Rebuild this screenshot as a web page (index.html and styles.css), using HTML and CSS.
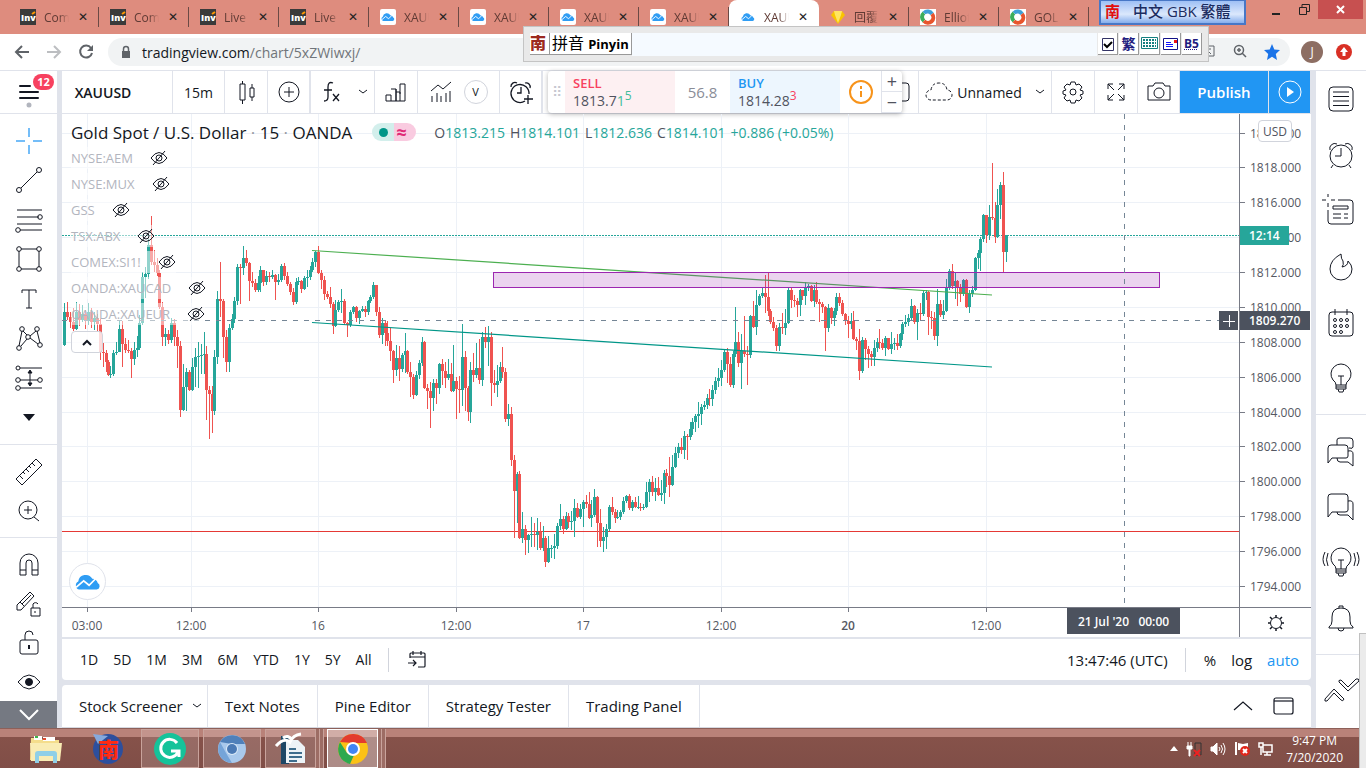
FILE: index.html
```
<!DOCTYPE html>
<html lang="en">
<head>
    <meta charset="UTF-8">
    <meta name="viewport" content="width=device-width, initial-scale=1.0">
    <title>XAUUSD Chart</title>
    <link rel="stylesheet" href="styles.css">
</head>
<body>
    <svg class="defs" aria-hidden="true">
        <symbol id="cloud" viewBox="0 0 24 16">
            <path fill="#2f9df4" d="M4 15a4 4 0 0 1-1-7.500A7 7 0 0 1 16 5a5.500 5.500 0 0 1 5 4 3.200 3.200 0 0 1-1 6z"/>
            <path fill="none" stroke="#fff" stroke-width="1.600" d="M1 13l7-6 5 4 6-6"/>
        </symbol>
        <symbol id="eye-off" viewBox="0 0 18 16">
            <path d="M1 8q8-11 16 0q-8 11-16 0zM15 1L3 15"/><circle cx="9" cy="8" r="3"/>
        </symbol>
        <symbol id="inv" viewBox="0 0 16 16">
            <rect width="16" height="16" fill="#3a3a3a"/>
            <text x="1" y="12" font-family="Open Sans, sans-serif" font-size="9" font-weight="800" fill="#fff">Inv</text>
            <path d="M12 5l3-2" stroke="#f90" stroke-width="2"/>
        </symbol>
        <symbol id="swirl" viewBox="0 0 16 16">
            <rect width="16" height="16" fill="#fff"/>
            <g fill="none" stroke-width="4"><path stroke="#3cae5c" d="M4 12A5 5 0 0 1 4 4"/><path stroke="#3d9fd6" d="M4 4a5 5 0 0 1 8 1"/><path stroke="#e8552d" d="M12 5a5 5 0 0 1-8 7"/></g>
        </symbol>
    </svg>

    <div class="tabstrip">
        <div class="tab"><svg><use href="#inv"/></svg><span>Com</span><button aria-label="Close tab">✕</button></div>
        <div class="tab"><svg><use href="#inv"/></svg><span>Com</span><button aria-label="Close tab">✕</button></div>
        <div class="tab"><svg><use href="#inv"/></svg><span>Live E</span><button aria-label="Close tab">✕</button></div>
        <div class="tab"><svg><use href="#inv"/></svg><span>Live E</span><button aria-label="Close tab">✕</button></div>
        <div class="tab"><svg class="white"><use href="#cloud"/></svg><span>XAUU</span><button aria-label="Close tab">✕</button></div>
        <div class="tab"><svg class="white"><use href="#cloud"/></svg><span>XAUU</span><button aria-label="Close tab">✕</button></div>
        <div class="tab"><svg class="white"><use href="#cloud"/></svg><span>XAUU</span><button aria-label="Close tab">✕</button></div>
        <div class="tab"><svg class="white"><use href="#cloud"/></svg><span>XAUU</span><button aria-label="Close tab">✕</button></div>
        <div class="tab active"><svg class="white"><use href="#cloud"/></svg><span>XAUU</span><button aria-label="Close tab">✕</button></div>
        <div class="tab"><svg viewBox="0 0 16 16"><path fill="#f9c400" d="M4 2h8l3 4-7 9-7-9z"/><path fill="#ffe561" d="M5 6h6l-3 8zM4 2l1 4h6l1-4z"/></svg><span>回覆</span><button aria-label="Close tab">✕</button></div>
        <div class="tab"><svg><use href="#swirl"/></svg><span>Elliot</span><button aria-label="Close tab">✕</button></div>
        <div class="tab"><svg><use href="#swirl"/></svg><span>GOLD</span><button aria-label="Close tab">✕</button></div>
        <div class="window-buttons">
            <button aria-label="Minimize"><svg width="10" height="12"><path d="M1 10h8" stroke="#222" stroke-width="2"/></svg></button>
            <button aria-label="Restore"><svg width="11" height="11" fill="none" stroke="#222"><path d="M.5 3.500h7v7h-7zM3 3V.5h7.500v7H8"/></svg></button>
            <button class="close" aria-label="Close"><svg width="9" height="9"><path d="M1 1l7 7M8 1l-7 7" stroke="#fff" stroke-width="2"/></svg></button>
        </div>
    </div>

    <div class="addressbar">
        <button aria-label="Back"><svg width="16" height="16" fill="none" stroke="#5f6368" stroke-width="2"><path d="M15 8H2M8 2L2 8l6 6"/></svg></button>
        <button aria-label="Forward"><svg width="16" height="16" fill="none" stroke="#bcbec1" stroke-width="2"><path d="M1 8h13M8 2l6 6-6 6"/></svg></button>
        <button aria-label="Reload"><svg width="16" height="16" fill="none" stroke="#5f6368" stroke-width="2"><path d="M13 4a6 6 0 1 0 1 5"/><path fill="#5f6368" stroke="none" d="M15 1v6H9z"/></svg></button>
        <div class="url">
            <svg width="10" height="13"><path fill="#5f6368" d="M1 5h8v7H1z"/><path fill="none" stroke="#5f6368" stroke-width="1.500" d="M2.500 5V3a2.500 2.500 0 0 1 5 0v2"/></svg>
            <span>tradingview.com<i>/chart/5xZWiwxj/</i></span>
            <div class="url-icons">
                <svg width="14" height="14" fill="none" stroke="#5f6368"><path d="M1 2h11v10H1zM4 5h5M6 3v2l-3 4M5 6l4 4"/></svg>
                <svg width="14" height="14" fill="none" stroke="#5f6368" stroke-width="1.500"><circle cx="6" cy="6" r="4.500"/><path d="M9 9l4 4M4 6h4M6 4v4"/></svg>
                <svg width="16" height="16"><path fill="#1a73e8" d="M8 0l2.300 5.400 5.700.6-4.200 4 1.200 6L8 12.700 3 16l1.200-6L0 6l5.700-.6z"/></svg>
            </div>
        </div>
        <div class="avatar">J</div>
        <svg width="16" height="16"><circle cx="8" cy="8" r="8" fill="#d93025"/><path fill="#fff" d="M8 3l4 5H9.500v4h-3V8H4z"/></svg>
    </div>

    <div class="app">
        <nav class="left-toolbar">
            <button class="menu" aria-label="Menu"><svg width="22" height="26" stroke="#131722" stroke-width="2" stroke-linecap="round"><path d="M2 7h10M2 13h18M2 19h18"/><circle cx="11" cy="26" r="1.500" fill="#b2b5be" stroke="#b2b5be"/></svg><b>12</b></button>
            <div class="tools drawing">
                <button aria-label="Cross"><svg viewBox="0 0 28 28"><path stroke="#74bdf8" stroke-width="2" d="M14 1v9M14 18v9M1 14h9M18 14h9"/></svg></button>
                <button aria-label="Trend line"><svg viewBox="0 0 28 28"><circle cx="4" cy="24" r="2.500"/><circle cx="24" cy="4" r="2.500"/><path d="M6 22L22 6"/></svg></button>
                <button aria-label="Fib retracement"><svg viewBox="0 0 28 28"><path d="M2 4h25M2 11h22M2 18h25M5 24h22"/><circle cx="25" cy="11" r="2.300"/><circle cx="3" cy="24" r="2.300"/></svg></button>
                <button aria-label="Rectangle"><svg viewBox="0 0 28 28"><path d="M6 4h16M24 6v16M22 24H6M4 22V6"/><circle cx="4" cy="4" r="2.300"/><circle cx="24" cy="4" r="2.300"/><circle cx="4" cy="24" r="2.300"/><circle cx="24" cy="24" r="2.300"/></svg></button>
                <button aria-label="Text"><svg viewBox="0 0 28 28"><path d="M7 8V5h14v3M14 5v18M11 23h6"/></svg></button>
                <button aria-label="Pattern"><svg viewBox="0 0 28 28"><circle cx="4" cy="24" r="2.300"/><circle cx="7" cy="5" r="2.300"/><circle cx="13" cy="13" r="2.300"/><circle cx="22" cy="5" r="2.300"/><circle cx="25" cy="21" r="2.300"/><path d="M4 22L7 7M8 7l4 4M15 12l6-5M22 7l3 12M23 20l-8-6M6 22l6-7"/></svg></button>
                <button aria-label="Forecast"><svg viewBox="0 0 28 28"><path d="M5 4h22M5 16h18M5 24h22"/><path fill="#131722" d="M15 7v13M13 9l2-3 2 3zM13 19l2 3 2-3z"/><circle cx="3" cy="4" r="2"/><circle cx="3" cy="16" r="2.300"/><circle cx="25" cy="16" r="2.300"/><circle cx="3" cy="24" r="2.300"/></svg></button>
                <button aria-label="Icons"><svg viewBox="0 0 28 28"><path fill="#131722" stroke="none" d="M8 11h12l-6 7z"/></svg></button>
            </div>
            <div class="tools">
                <button aria-label="Measure"><svg viewBox="0 0 28 28"><path d="M1 21L21 1l6 6L7 27zM5 18l3 3M8 14l2 2M11 11l3 3M14 8l2 2M17 5l3 3"/></svg></button>
                <button aria-label="Zoom in"><svg viewBox="0 0 28 28"><circle cx="13" cy="13" r="9"/><path d="M19 20l5 4M9 13h8M13 9v8"/></svg></button>
            </div>
            <div class="tools">
                <button aria-label="Magnet"><svg viewBox="0 0 28 28"><path d="M5 24V12a9 9 0 0 1 18 0v12h-6V12a3 3 0 0 0-6 0v12zM5 19h6M17 19h6"/></svg></button>
                <button aria-label="Stay in drawing mode"><svg viewBox="0 0 28 28"><path d="M2 20v-5L15 2l4 4L6 20zM5 12l4 4M7 14l9-9M16 18h9v8h-9zM18 18v-4a3 3 0 0 1 5 0M20 21v2"/></svg></button>
                <button aria-label="Lock drawings"><svg viewBox="0 0 28 28"><rect x="5" y="11" width="18" height="14" rx="2"/><path d="M10 11V6a4 4 0 0 1 8 0"/><path stroke-width="2" d="M14 16v4"/></svg></button>
                <button aria-label="Hide drawings"><svg viewBox="0 0 28 28"><path d="M3 14q11-14 22 0q-11 14-22 0z"/><circle cx="14" cy="14" r="3.500" fill="#131722"/></svg></button>
            </div>
            <button class="more" aria-label="More tools"><svg width="20" height="12" fill="none" stroke="#fff" stroke-width="2"><path d="M1 1l9 9 9-9"/></svg></button>
        </nav>

        <main class="center">
            <header class="chart-header">
                <button class="symbol">XAUUSD</button>
                <button class="interval">15m</button>
                <button class="w43" aria-label="Candles"><svg viewBox="0 0 28 28"><path d="M8 6h5v16H8zM10.500 3v3M10.500 22v4M18 10h4v9h-4zM20 6v4M20 19v4"/></svg></button>
                <button class="w43 thick" aria-label="Compare"><svg viewBox="0 0 28 28"><circle cx="14" cy="14" r="10"/><path d="M14 9v10M9 14h10"/></svg></button>
                <button class="w64" aria-label="Indicators"><svg viewBox="0 0 28 28"><path stroke-width="1.300" d="M15 5q-5-2-5 4v10q0 4-4 4M6 12h8M15 16l6 7M21 16l-6 7"/></svg><svg class="caret" viewBox="0 0 10 6"><path d="M1 1l4 3 4-3"/></svg></button>
                <button class="w43" aria-label="Financials"><svg viewBox="0 0 28 28"><path d="M4 17h5v6H4zM9 23h5V11H9M14 11v12h4v-9h-4M18 23h5V6h-5v10"/></svg></button>
                <button class="w82" aria-label="Templates"><svg viewBox="0 0 28 28"><path d="M4 13l7-6 5 4 8-7M5 18v6M10 15v9M14 18v6M19 15v9M23 13v11"/></svg><span class="round">V</span></button>
                <button class="w43 thick" aria-label="Alert"><svg viewBox="0 0 28 28"><path stroke-width="1.300" d="M18 23a9 9 0 1 1 4-7M14 9v6h-4M4 9a4 4 0 0 1 6-4M18 5a4 4 0 0 1 5 5M17 21h9M21 17v9"/></svg></button>
                <span class="spacer"></span>
                <button class="w41" aria-label="Layout"><svg viewBox="0 0 28 28"><rect x="3" y="5" width="22" height="18" rx="3"/></svg></button>
                <button class="layout-name"><svg viewBox="0 0 28 28" stroke-dasharray="3 2"><path d="M6 22a5 5 0 0 1 0-10q1-7 8-7t8 7a5 5 0 0 1 0 10z"/></svg>Unnamed<svg class="caret" viewBox="0 0 10 6"><path d="M1 1l4 3 4-3"/></svg></button>
                <button class="w43" aria-label="Settings"><svg viewBox="0 0 28 28"><circle cx="14" cy="14" r="3"/><path d="M12 4h4l1 3 3-1 3 3-2 3 3 1v3l-3 1 2 3-3 3-3-1-1 3h-4l-1-3-3 1-3-3 2-3-3-1v-3l3-1-2-3 3-3 3 1z"/></svg></button>
                <button class="w43" aria-label="Fullscreen"><svg viewBox="0 0 28 28"><path d="M6 11V6h5M6 6l6 6M17 6h5v5M22 6l-6 6M6 17v5h5M6 22l6-6M22 17v5h-5M22 22l-6-6"/></svg></button>
                <button class="w42" aria-label="Snapshot"><svg viewBox="0 0 28 28"><path d="M3 8h5l2-3h8l2 3h5v14H3z"/><circle cx="14" cy="15" r="5"/></svg></button>
                <button class="publish">Publish</button>
                <button class="play" aria-label="Play"><svg viewBox="0 0 28 28"><circle cx="14" cy="14" r="11"/><path fill="#fff" stroke="none" d="M11 9l7 5-7 5z"/></svg></button>

                <div class="trade">
                    <span class="grip">⠿</span>
                    <button class="sell"><b>SELL</b><span>1813.7<em>1<sup>5</sup></em></span></button>
                    <span class="spread">56.8</span>
                    <button class="buy"><b>BUY</b><span>1814.28<em><sup>3</sup></em></span></button>
                    <button class="info" aria-label="Info"><svg width="24" height="24" fill="none" stroke="#f7931a" stroke-width="2"><circle cx="12" cy="12" r="11"/><path d="M12 11v6M12 6v3"/></svg></button>
                    <div class="step"><button>+</button><button>−</button></div>
                </div>
            </header>

            <section class="chart">
                <div class="pane">
                    <svg id="plot" class="plot"></svg>
                    <div class="legend">
                        <div class="title">
                            <h1>Gold Spot / U.S. Dollar <i>·</i> 15 <i>·</i> OANDA</h1>
                            <span class="status"><i></i><b>≈</b></span>
                            <span class="ohlc"><span><i>O</i>1813.215</span><span><i>H</i>1814.101</span><span><i>L</i>1812.636</span><span><i>C</i>1814.101</span><span>+0.886 (+0.05%)</span></span>
                        </div>
                        <ul>
                            <li>NYSE:AEM<svg><use href="#eye-off"/></svg></li>
                            <li>NYSE:MUX<svg><use href="#eye-off"/></svg></li>
                            <li>GSS<svg><use href="#eye-off"/></svg></li>
                            <li>TSX:ABX<svg><use href="#eye-off"/></svg></li>
                            <li>COMEX:SI1!<svg><use href="#eye-off"/></svg></li>
                            <li>OANDA:XAUCAD<svg><use href="#eye-off"/></svg></li>
                            <li>OANDA:XAUEUR<svg><use href="#eye-off"/></svg></li>
                        </ul>
                        <button class="collapse" aria-label="Collapse"><svg width="10" height="7" fill="none" stroke="#131722" stroke-width="2"><path d="M1 6l4-4 4 4"/></svg></button>
                    </div>
                    <a class="tv-logo" href="#" aria-label="TradingView"><svg width="26" height="18"><use href="#cloud"/></svg></a>
                    <button class="add-line" aria-label="Add"><svg width="12" height="12" stroke="#fff"><path d="M6.500 0v12M0 6.500h12"/></svg></button>
                </div>
                <div class="price-axis">
                    <svg id="prices" class="plot"></svg>
                    <button class="currency">USD</button>
                    <span class="tag last">12:14</span>
                    <span class="tag cross">1809.270</span>
                </div>
                <div class="time-axis">
                    <svg id="times" class="plot"></svg>
                    <span class="tag date">21 Jul '20 &nbsp; 00:00</span>
                </div>
                <button class="axis-settings" aria-label="Axis settings"><svg width="18" height="18" fill="none" stroke="#131722"><circle cx="9" cy="9" r="5.500"/><path stroke-width="1.500" d="M9 1v2M9 15v2M1 9h2M15 9h2M3 3l2 2M13 13l2 2M3 15l2-2M13 5l2-2"/></svg></button>
            </section>

            <div class="range-bar">
                <button>1D</button><button>5D</button><button>1M</button><button>3M</button><button>6M</button><button>YTD</button><button>1Y</button><button>5Y</button><button>All</button>
                <button class="goto" aria-label="Go to date"><svg width="20" height="20" fill="none" stroke="#131722" stroke-width="1.200"><path d="M3 8V4q0-1 1-1h13q1 0 1 1v12q0 1-1 1h-6M3 7h15M6 1v4M14 1v4M1 13h8M6 10l3 3-3 3"/></svg></button>
                <span class="spacer"></span>
                <button class="clock">13:47:46 (UTC)</button>
                <button class="pct">%</button><button class="log">log</button><button class="auto">auto</button>
            </div>

            <div class="panel-tabs">
                <button>Stock Screener<svg class="caret" viewBox="0 0 10 6"><path d="M1 1l4 3 4-3"/></svg></button>
                <button>Text Notes</button>
                <button>Pine Editor</button>
                <button>Strategy Tester</button>
                <button>Trading Panel</button>
                <span class="spacer"></span>
                <svg width="20" height="10" fill="none" stroke="#131722" stroke-width="1.200"><path d="M1 9l9-8 9 8"/></svg>
                <svg width="22" height="18" fill="none" stroke="#131722" stroke-width="1.200"><rect x="1" y="1" width="19" height="16" rx="2"/><path d="M1 4h19"/></svg>
            </div>
        </main>

        <nav class="right-toolbar">
            <div>
                <button aria-label="Watchlist"><svg viewBox="0 0 28 28"><rect x="2" y="2" width="24" height="24" rx="4"/><path d="M6 7h16M6 11.500h16M6 16h16M6 20.500h16"/></svg></button>
                <button aria-label="Alerts"><svg viewBox="0 0 28 28"><circle cx="14" cy="15" r="11"/><path d="M14 7v8H8M3 9a5 5 0 0 1 7-6M18 3a5 5 0 0 1 7 6M6 24l-2 3M22 24l2 3"/></svg></button>
                <button aria-label="Data window"><svg viewBox="0 0 28 28"><path d="M11 3h12q3 0 3 3v18q0 3-3 3H4q-3 0-3-3V13M1 0v-3M1 6v4M-5 3h4M4 3h4M6 9h15v3H6zM6 17h8M17 17h4M6 21h8M17 21h4"/></svg></button>
                <button aria-label="Hotlist"><svg viewBox="0 0 28 28"><path d="M14 1q0 5 2 7 1 4-1 6 6-1 6-6 4 4 4 8a11 11 0 0 1-22 0q0-9 11-15z"/></svg></button>
                <button aria-label="Calendar"><svg viewBox="0 0 28 28"><rect x="2" y="3" width="24" height="24" rx="3"/><path d="M8 0v6M20 0v6"/><g><circle cx="8" cy="11" r="1.500"/><circle cx="14" cy="11" r="1.500"/><circle cx="20" cy="11" r="1.500"/><circle cx="8" cy="17" r="1.500"/><circle cx="14" cy="17" r="1.500"/><circle cx="20" cy="17" r="1.500"/><circle cx="8" cy="23" r="1.500"/><circle cx="14" cy="23" r="1.500"/></g></svg></button>
                <button aria-label="My ideas"><svg viewBox="0 0 28 28"><path d="M9 20q0-3-3-5a10 10 0 1 1 16 0q-3 2-3 5zM9 20v4h10v-4M9 22h10M11 24l1 3h4l1-3M14 20v-9M11 11h6"/></svg></button>
            </div>
            <div>
                <button aria-label="Public chats"><svg viewBox="0 0 28 28"><path d="M1 26V11q0-3 3-3h14q3 0 3 3v8q0 2-2 2H5zM10 8V3q0-2 3-2h10q3 0 3 3v6q0 2-4 1M21 14q5-1 5 3v12l-5-4h-8q-3 0-3-4"/></svg></button>
                <button aria-label="Private chats"><svg viewBox="0 0 28 28"><path d="M1 24V4q0-3 3-3h14q3 0 3 3v13q0 2-3 2H5zM21 8q5-1 5 3v16l-5-5h-8q-3 0-3-3"/></svg></button>
                <button aria-label="Ideas stream"><svg viewBox="0 0 28 28"><path d="M9 20q0-3-3-5a10 10 0 1 1 16 0q-3 2-3 5zM9 20v4h10v-4M9 22h10M11 24l1 3h4l1-3M14 20v-9M11 11h6M1 4q-3 7 0 13M-2 3q-4 8 0 14M27 4q3 7 0 13M30 3q4 8 0 14"/></svg></button>
                <button aria-label="Notifications"><svg viewBox="0 0 28 28"><path d="M2 22q3-2 3-6V12q0-9 9-9t9 9v4q0 4 3 6v1H2zM12 3V1h4v2M11 23q0 3 3 3t3-3"/></svg></button>
            </div>
            <div>
                <button aria-label="Order panel"><svg viewBox="0 0 28 28"><path d="M-2 22L7 12l10 10q-1 3-3 1l-7-7-7 8q-3 1-2-2zM12 5l9 9 11-10q0-3-3-2l-8 8-7-7q-3 0-2 2z"/></svg></button>
            </div>
        </nav>
    </div>

    <footer class="taskbar">
        <button aria-label="Explorer"><svg width="34" height="30"><path fill="#f4dd8c" d="M2 4h10l2 2h16v20H1z"/><path fill="#fff" d="M5 2h8v4H5zM14 3h12v4H14z"/><path fill="#3cb44a" d="M6 2h3v2H6z"/><path fill="#e0492f" d="M14 4h3v2h-3z"/><path fill="#f9ecb4" d="M1 9h32l-2 18H2z"/><path fill="#8fcfe8" d="M6 20q0-3 3-3h16q3 0 3 3v9h-4v-7H10v7H6z"/></svg></button>
        <button aria-label="NJStar"><svg width="32" height="32"><circle cx="16" cy="16" r="15" fill="#2d4f9d"/><path fill="#86a9dd" d="M1 1l15 2-10 8z"/><text x="6" y="24" font-family="Noto Sans CJK SC, sans-serif" font-size="21" font-weight="900" fill="#ff2a12">南</text></svg></button>
        <button class="open" aria-label="Grammarly"><svg width="32" height="32"><circle cx="16" cy="16" r="16" fill="#15c39a"/><path fill="none" stroke="#fff" stroke-width="3" d="M23 10a9 9 0 1 0 1 9M17 18h8v6"/></svg></button>
        <button class="open" aria-label="Chromium"><svg width="30" height="30"><circle cx="15" cy="15" r="14" fill="#a9c9ec"/><path fill="#4f80ba" d="M3 8a14 14 0 0 1 25 2H15z"/><path fill="#75a4d8" d="M3 8l6 11 6 10A14 14 0 0 1 3 8z"/><circle cx="15" cy="15" r="6" fill="#dbe9f7"/><circle cx="15" cy="15" r="5" fill="#4b7ab5"/></svg></button>
        <button class="open stacked" aria-label="Writer"><svg width="32" height="32"><path fill="#1d4766" d="M6 3h8v28H6z"/><path fill="#edf3f7" d="M11 7h12l7 7v16H11z"/><path stroke="#3e6d8d" stroke-width="2" d="M14 16h7M14 20h13M14 24h13M14 28h8"/><path fill="none" stroke="#fff" stroke-width="3" d="M1 13q8-9 14-4 3-7 11-8M8 5q5-4 9 2"/></svg></button>
        <button class="open stacked current" aria-label="Chrome"><svg width="30" height="30"><circle cx="15" cy="15" r="15" fill="#fbc116"/><path fill="#e33b2e" d="M2 8a15 15 0 0 1 27 1H15z"/><path fill="#2da94f" d="M2 8l7 11 7 2-4 9A15 15 0 0 1 2 8z"/><circle cx="15" cy="15" r="7" fill="#fff"/><circle cx="15" cy="15" r="5" fill="#4285f4"/></svg></button>
        <span class="spacer"></span>
        <div class="tray">
            <svg width="8" height="5"><path fill="#fff" d="M0 5l4-5 4 5z"/></svg>
            <svg width="16" height="16" fill="none" stroke="#fff"><path d="M2 1v4M5 1v4"/><path fill="#fff" d="M1 5h5v3H1zM3 8h1v7H3z"/><path stroke="#333" d="M9 2h6v12H9z"/><path stroke="#e22" stroke-width="2" d="M8 9l6 6M14 9l-6 6"/></svg>
            <svg width="16" height="14" fill="none" stroke="#fff"><path fill="#fff" d="M1 5h2l4-4v12L3 9H1z"/><path d="M9 5q2 2 0 4M11 3q3 4 0 8M13 1q4 6 0 12"/></svg>
            <svg width="16" height="15"><path fill="#fff" d="M1 1h2v13H1zM4 2l5 1 5-1v7H4z"/><circle cx="11" cy="10" r="5" fill="#e0261a"/><path stroke="#fff" stroke-width="2" d="M9 8l4 4M13 8l-4 4"/></svg>
            <svg width="16" height="14" fill="none" stroke="#fff" stroke-width="1.500"><path d="M5 3h9v7H5zM9 10v3M6 13h7M1 1h4v4H1zM3 5v8"/></svg>
        </div>
        <time>9:47 PM<br>7/20/2020</time>
    </footer>

    <div class="ime">
        <span class="ime-icon">南</span><span class="ime-name">拼音 <b>Pinyin</b></span>
        <input type="text" aria-label="Composition">
        <button aria-label="Options"><svg width="14" height="16" fill="none" stroke="#336"><path d="M1.500 2.500h11v12h-11z"/><path stroke="#000" stroke-width="2" d="M3 8l3 3 5-5"/></svg></button>
        <button class="fan">繁</button>
        <button aria-label="Keyboard"><svg width="17" height="13"><path fill="#fff" stroke="#148080" d="M.5.5h16v11H.5z"/><path stroke="#148080" stroke-width="2" stroke-dasharray="2 1" d="M2 3h13M2 6h13M2 9h13"/></svg></button>
        <button aria-label="Mail"><svg width="16" height="14"><path fill="#fff" stroke="#118" d="M.5 1.500h14v11H.5z"/><path stroke="#11f" d="M3 5.500h5M3 7.500h7M3 9.500h7"/><path fill="#e11" d="M11 3h3v3h-3z"/></svg></button>
        <button class="b5">B5</button>
    </div>
    <div class="ime-title"><b>南</b>中文 GBK 繁體</div>
    <div class="edge"></div>

    <script src="chart.js"></script>
</body>
</html>
```
FILE: styles.css
```
* {
    box-sizing: border-box;
}

body {
    margin: 0;
    height: 100vh;
    min-height: 720px;
    display: flex;
    flex-direction: column;
    position: relative;
    overflow: hidden;
    font-family: "Open Sans", "Noto Sans CJK SC", sans-serif;
    font-size: 14px;
    color: #131722;
    background: #e0e3eb;
}

button {
    font: inherit;
    color: inherit;
    border: 0;
    padding: 0;
    margin: 0;
    background: none;
    display: flex;
    align-items: center;
    justify-content: center;
    white-space: nowrap;
}

svg {
    flex: none;
    overflow: visible;
}

i, em {
    font-style: normal;
}

.defs {
    position: absolute;
    width: 0;
    height: 0;
}

.spacer {
    flex: 1;
}

/* browser */
.tabstrip {
    height: 34px;
    flex: none;
    display: flex;
    background: #de8c7e;
    padding-left: 9px;
    font-size: 12px;
    color: #5f3a34;
}

.tab {
    width: 90px;
    display: flex;
    align-items: center;
    padding-left: 11px;
    background: linear-gradient(#6b4a45, #6b4a45) right 7px / 1px 20px no-repeat;
}

.tab svg {
    width: 16px;
    height: 16px;
}

.tab .white {
    background: #fff;
    border-radius: 2px;
    padding: 1px;
}

.tab span {
    width: 25px;
    margin: 0 8px;
    overflow: hidden;
    white-space: nowrap;
    -webkit-mask-image: linear-gradient(90deg, #000 60%, transparent);
}

.tab button {
    width: 12px;
    color: #222;
    font-family: "DejaVu Sans", sans-serif;
}

.tab.active {
    background: #fff;
    border-radius: 8px 8px 0 0;
}

.window-buttons {
    margin-left: auto;
    margin-right: 3px;
    display: flex;
    height: 19px;
}

.window-buttons button {
    width: 28px;
}

.window-buttons .close {
    width: 45px;
    background: #c75050;
}

.addressbar {
    height: 36px;
    flex: none;
    display: flex;
    align-items: center;
    background: #fff;
    padding: 0 14px;
    gap: 16px;
}

.addressbar > button {
    width: 16px;
}

.url {
    flex: 1;
    height: 28px;
    border-radius: 14px;
    background: #f1f3f4;
    display: flex;
    align-items: center;
    gap: 11px;
    padding: 0 10px 0 13px;
    margin-right: -5px;
    margin-left: -2px;
}

.url i {
    color: #70757a;
}

.url-icons {
    margin-left: auto;
    display: flex;
    gap: 17px;
}

.avatar {
    width: 22px;
    height: 22px;
    margin-right: -3px;
    border-radius: 50%;
    background: #8d6e63;
    color: #fff;
    font-size: 12px;
    line-height: 22px;
    text-align: center;
}

/* layout */
.app {
    flex: 1;
    min-height: 0;
    display: flex;
    gap: 5px;
    padding-top: 1px;
}

.left-toolbar,
.right-toolbar {
    background: #fff;
    flex: none;
    display: flex;
    flex-direction: column;
    overflow: hidden;
}

.left-toolbar {
    width: 57px;
}

.right-toolbar {
    width: 50px;
}

.left-toolbar svg[viewBox],
.right-toolbar svg,
.chart-header svg[viewBox] {
    width: 28px;
    height: 28px;
    fill: none;
    stroke: #131722;
}

.menu {
    height: 43px;
    flex: none;
    border-bottom: 1px solid #e0e3eb;
    position: relative;
}

.menu b {
    position: absolute;
    left: 33px;
    top: 3px;
    width: 21px;
    border-radius: 8px;
    background: #f7415f;
    color: #fff;
    font-size: 11px;
    line-height: 16px;
}

.tools {
    flex: none;
    padding: 7px 0;
    border-bottom: 1px solid #e0e3eb;
    display: flex;
    flex-direction: column;
}

.tools:last-of-type {
    padding-bottom: 0;
    border: 0;
}

.tools button {
    height: 39px;
}

.drawing {
    height: 331px;
}

.drawing button {
    flex: 1;
}

.more {
    flex: 1;
    background: #757982;
}

.right-toolbar div {
    padding-bottom: 7px;
    border-bottom: 1px solid #e0e3eb;
}

.right-toolbar div + div {
    padding-top: 8px;
}

.right-toolbar div:last-child {
    border: 0;
}

.right-toolbar button {
    width: 50px;
    height: 56px;
}

.center {
    flex: 1;
    min-width: 0;
    display: flex;
    flex-direction: column;
}

/* header */
.chart-header {
    height: 43px;
    flex: none;
    display: flex;
    background: #fff;
    border-bottom: 1px solid #e0e3eb;
    position: relative;
}

.chart-header > button {
    border-right: 1px solid #e0e3eb;
    flex: none;
}

.chart-header > .thick {
    border-right-width: 2px;
}

.chart-header svg.caret,
.panel-tabs .caret {
    width: 10px;
    height: 6px;
    fill: none;
    stroke: #131722;
}

.symbol {
    width: 111px;
    font-weight: 600;
    padding-right: 28px;
}

.interval {
    width: 52px;
}

.w41 { width: 41px; }
.w42 { width: 42px; }
.w43 { width: 43px; }

.w64 {
    width: 64px;
    gap: 12px;
}

.w82 {
    width: 82px;
    gap: 9px;
    padding-right: 3px;
}

.round {
    width: 24px;
    height: 24px;
    border: 1px solid #d1d4dc;
    border-radius: 50%;
    font-size: 11px;
    line-height: 22px;
}

.layout-name {
    width: 133px;
    gap: 4px;
}

.layout-name .caret {
    margin-left: 9px;
}

.publish {
    width: 89px;
    background: #2196f3;
    color: #fff;
    font-size: 15px;
    font-weight: 600;
}

.play {
    width: 42px;
    background: #2196f3;
}

.chart-header .play svg {
    stroke: #fff;
}

.trade {
    position: absolute;
    left: 486px;
    top: 0;
    height: 42px;
    display: flex;
    background: #fff;
    border-radius: 4px;
    box-shadow: 0 1px 5px rgba(0, 0, 0, 0.3);
    color: #50535e;
}

.trade button {
    cursor: pointer;
}

.grip {
    width: 17px;
    text-align: center;
    line-height: 42px;
    color: #c5c8d0;
}

.sell,
.buy {
    width: 110px;
    flex-direction: column;
    align-items: flex-start;
    line-height: 17px;
    padding-left: 8px;
}

.sell {
    background: #fdf0f2;
}

.sell b {
    color: #f7415f;
}

.buy {
    background: #edf6fe;
}

.buy b {
    color: #2196f3;
}

.trade b {
    font-size: 13px;
    font-weight: 600;
}

.sell em {
    color: #42bd9a;
}

.buy em {
    color: #f7415f;
}

.trade sup {
    font-size: 12px;
    line-height: 1px;
}

.spread {
    width: 55px;
    text-align: center;
    font-size: 15px;
    line-height: 42px;
    color: #8a8d97;
}

.info {
    width: 41px;
}

.step {
    width: 21px;
    border-left: 1px solid #e0e3eb;
}

.step button {
    width: 20px;
    height: 21px;
    font-size: 18px;
    border-bottom: 1px solid #e0e3eb;
}

/* chart */
.chart {
    flex: 1;
    min-height: 0;
    display: grid;
    grid-template-columns: 1fr 72px;
    grid-template-rows: 1fr 30px;
    background: #fff;
    border-bottom: 2px solid #e0e3eb;
}

.pane,
.price-axis,
.time-axis {
    position: relative;
    overflow: hidden;
    min-width: 0;
    min-height: 0;
}

.plot {
    position: absolute;
    left: 0;
    top: 0;
    width: 100%;
    height: 100%;
}

.price-axis,
.axis-settings {
    border-left: 1px solid #787b86;
}

.time-axis,
.axis-settings {
    border-top: 1px solid #787b86;
}

.plot text {
    font-size: 12px;
    fill: #555862;
}

.plot .day {
    font-weight: 600;
}

.legend {
    position: relative;
    padding: 6px 0 0 9px;
}

.title {
    display: flex;
    align-items: center;
    height: 24px;
}

h1 {
    margin: 0;
    font-size: 17px;
    font-weight: 400;
    white-space: nowrap;
}

h1 i {
    color: #9598a1;
}

.status {
    width: 44px;
    height: 18px;
    margin: 0 18px 0 20px;
    border-radius: 9px;
    background: linear-gradient(90deg, #d3efec 50%, #f9cbe0 50%);
    display: flex;
    align-items: center;
    gap: 8px;
    padding-left: 7px;
    color: #e02b77;
}

.status i {
    width: 9px;
    height: 9px;
    border-radius: 50%;
    background: #009688;
}

.status b {
    font-size: 18px;
    line-height: 18px;
}

.ohlc {
    display: flex;
    gap: 5px;
    color: #26a69a;
    white-space: nowrap;
}

.ohlc i {
    color: #50535e;
}

.legend ul {
    list-style: none;
    margin: 3px 0 0;
    padding: 0;
    display: flex;
    flex-direction: column;
    align-items: flex-start;
    gap: 4px;
}

.legend li {
    height: 22px;
    line-height: 22px;
    font-size: 13px;
    font-weight: 500;
    color: #b2b5be;
    background: rgba(255, 255, 255, 0.5);
    display: flex;
    align-items: center;
    gap: 17px;
}

.legend li svg {
    width: 18px;
    height: 16px;
    fill: none;
    stroke: #131722;
    stroke-width: 1px;
}

.collapse {
    width: 32px;
    height: 22px;
    margin-top: 6px;
    border: 1px solid #d1d4dc;
    border-radius: 4px;
    background: rgba(255, 255, 255, 0.8);
}

.tv-logo {
    position: absolute;
    left: 7px;
    bottom: 7px;
    width: 37px;
    height: 37px;
    border-radius: 50%;
    border: 1px solid #e0e3eb;
    background: #fff;
    display: flex;
    align-items: center;
    justify-content: center;
}

.add-line {
    position: absolute;
    right: 1px;
    top: 197px;
    width: 19px;
    height: 19px;
    background: #4c525e;
}

.tag {
    position: absolute;
    color: #fff;
    font-size: 12px;
    font-weight: 600;
    line-height: 19px;
    padding-left: 9px;
    left: 0;
}

.last {
    top: 112px;
    width: 49px;
    background: #26a69a;
}

.cross {
    top: 197px;
    width: 70px;
    background: #4c525e;
}

.date {
    left: 1005px;
    top: 0;
    width: 113px;
    height: 26px;
    line-height: 28px;
    padding: 0;
    text-align: center;
    background: #4c525e;
}

.currency {
    position: absolute;
    left: 18px;
    top: 6px;
    width: 34px;
    height: 22px;
    border: 1px solid #d1d4dc;
    border-radius: 4px;
    background: #fff;
    font-size: 12px;
    color: #50535e;
}

/* bottom bars */
.range-bar,
.panel-tabs {
    flex: none;
    display: flex;
    align-items: center;
    background: #fff;
}

.range-bar {
    height: 41px;
    padding: 0 12px 0 18px;
    gap: 15px;
    border-radius: 0 0 4px 4px;
}

.goto {
    height: 24px;
    padding-left: 18px;
    margin-left: 2px;
    border-left: 1px solid #d1d4dc;
}

.clock,
.pct,
.log,
.auto {
    font-size: 15px;
}

.pct {
    height: 24px;
    padding-left: 18px;
    margin-left: 2px;
    border-left: 1px solid #d1d4dc;
}

.auto {
    color: #2196f3;
}

.panel-tabs {
    height: 43px;
    margin: 5px 0 0;
    border-radius: 4px 4px 0 0;
    border-bottom: 1px solid #d5d8e0;
    padding-right: 16px;
    font-size: 15px;
}

.panel-tabs button {
    height: 42px;
    padding: 0 17px;
    gap: 9px;
    border-right: 1px solid #e0e3eb;
}

.panel-tabs button:first-child {
    padding-right: 5px;
}

.panel-tabs > svg {
    margin-left: 20px;
}

/* taskbar */
.taskbar {
    height: 40px;
    flex: none;
    display: flex;
    align-items: center;
    gap: 4px;
    padding: 0 23px 0 17px;
    background: linear-gradient(#b98279 8px, #86524a 8px, #804e47);
    border-top: 1px solid #8d6059;
    color: #fff;
    font-size: 12px;
}

.taskbar button {
    width: 58px;
    height: 39px;
    flex: none;
}

.taskbar .open {
    border: 1px solid #c9a39c;
    background: rgba(255, 255, 255, 0.15);
}

.taskbar .stacked {
    width: 51px;
    margin-right: 7px;
    box-shadow: 3px 0 #9d6d65, 4px 0 #c9a39c, 7px 0 #9d6d65, 8px 0 #c9a39c;
}

.taskbar .current {
    background: rgba(255, 255, 255, 0.35);
    border-color: #fff;
}

.tray {
    display: flex;
    align-items: center;
    gap: 8px;
    margin-right: 8px;
}

.taskbar time {
    line-height: 17px;
    text-align: center;
}

/* input method windows */
.ime {
    position: absolute;
    left: 523px;
    top: 26px;
    width: 686px;
    height: 36px;
    display: flex;
    align-items: center;
    padding: 0 6px;
    background: #e9e9e9;
    border: 1px solid #c4c4c4;
}

.ime-icon,
.ime-name,
.ime button {
    height: 22px;
    line-height: 20px;
    border-right: 1px solid #999;
    border-bottom: 1px solid #999;
    background: #fff;
}

.ime-icon {
    width: 20px;
    color: #9c2a20;
    font-size: 16px;
    font-weight: 900;
}

.ime-name {
    padding: 0 2px;
    font-size: 16px;
    white-space: nowrap;
    color: #000;
}

.ime-name b {
    font-size: 13px;
}

.ime input {
    flex: 1;
    min-width: 0;
    height: 23px;
    border: 0;
    background: #f5faff;
}

.ime button {
    width: 20px;
    margin-left: 1px;
    color: #221c80;
    font-weight: 700;
}

.ime .b5 {
    font-size: 12px;
    text-decoration: underline dotted;
}

.ime-title {
    position: absolute;
    right: 120px;
    top: 0;
    width: 147px;
    height: 25px;
    line-height: 21px;
    padding-left: 4px;
    border: 2px solid #4777c6;
    border-top-width: 1px;
    background: linear-gradient(#9fc0f5, #dbe8fc 60%, #86aeec);
    color: #1c2c60;
    font-size: 15px;
    font-weight: 500;
    white-space: nowrap;
}

.ime-title b {
    color: #e01010;
    margin-right: 13px;
}

.edge {
    position: absolute;
    right: 0;
    bottom: 0;
    width: 7px;
    height: 135px;
    background: #ebebeb;
    border: 1px solid #c0c0c0;
    border-width: 1px 0 0 1px;
}
```
FILE: chart.js
```
// [x, close, high, low] - each bar opens at the previous close
const bars = [
    [64,312,303,346],[67,317,302,320],[70,322,312,328],[73,329,308,331],[76,312,302,330],[79,320,304,326],[82,314,305,322],[85,321,310,329],[88,312,303,325],[91,322,308,328],[94,318,312,330],[97,324,314,331],[100,352,319,360],
    [103,353,343,367],[106,362,350,372],[108,375,360,376],[110,374,366,378],[113,353,350,376],[116,352,342,355],[119,329,321,352],[122,344,321,367],[125,350,338,353],[128,351,340,353],[131,359,348,378],[134,350,342,365],[137,348,336,357],
    [139,323,315,350],[142,277,272,325],[145,274,267,298],[148,245,239,279],[151,262,216,265],[154,265,250,272],[157,273,258,276],[159,307,270,309],[162,337,302,346],[165,334,328,346],[168,340,330,344],[171,323,318,343],[174,337,319,346],[177,346,330,368],[180,410,341,417],
    [183,387,364,411],[186,372,368,411],[189,390,370,391],[192,367,358,391],[195,357,348,387],[198,356,342,388],[201,355,344,374],[204,354,332,374],[206,390,346,420],[209,394,386,439],[212,411,386,433],[214,357,350,415],[217,299,291,364],[220,301,262,317],[223,337,299,358],[226,362,330,372],
    [229,328,324,372],[232,319,314,330],[234,301,297,323],[237,267,264,305],[240,268,264,304],[243,258,246,275],[246,263,250,266],[249,281,262,301],[252,283,272,287],[255,290,279,292],[258,283,276,292],[260,270,266,292],[263,282,270,286],[266,276,271,285],[269,277,272,282],[272,275,270,279],[275,282,274,300],[278,280,274,285],[281,266,264,282],[284,276,263,280],[287,284,272,286],[290,292,282,295],[293,302,288,305],[296,282,278,304],[298,281,277,285],[301,289,280,293],[304,278,276,290],[307,277,270,287],[310,270,266,280],[312,262,258,272],
    [315,252,251,267],[318,273,246,274],[321,280,270,289],[324,294,276,300],[327,297,291,299],[330,304,287,308],[333,326,302,334],[335,310,300,327],[338,302,300,312],[341,301,289,313],[344,323,299,325],[347,325,322,337],[350,312,310,327],[353,307,306,314],[356,318,306,322],[359,311,310,324],[362,309,306,312],[365,312,306,317],[368,301,300,315],[370,297,295,303],[373,285,282,299],[376,312,285,316],[379,335,307,338],[382,323,318,344],[385,333,320,346],[387,341,321,346],[390,351,328,361],[393,370,350,383],[396,358,345,376],[399,369,346,381],[402,355,353,372],[405,351,333,373],[407,372,350,374],[410,377,362,397],[413,395,374,399],[416,375,371,396],[419,363,360,379],[422,342,337,366],[424,388,341,389],[427,391,384,409],[430,398,382,428],[433,383,379,411],[436,388,379,404],[439,364,363,394],[442,371,359,385],[445,378,362,388],[448,374,359,380],[451,391,363,392],[453,381,345,392],[456,389,377,419],[459,390,376,413],[462,357,324,406],[465,388,351,411],[468,412,386,421],[470,370,362,423],[473,375,353,382],[476,368,343,378],[479,380,339,384],[482,337,332,386],[485,342,327,348],[488,337,326,366],[491,383,332,406],[494,385,370,393],[497,381,365,397],[500,367,362,383],[502,372,347,378],[505,419,368,422],[508,414,404,426],
    [511,460,407,466],[514,491,455,538],[517,474,472,523],[519,538,471,539],[522,529,512,543],[525,540,525,555],[528,535,534,553],[531,534,517,547],[534,535,523,547],[537,532,518,550],[540,548,522,550],[543,538,526,551],[545,562,536,567],[548,548,536,563],[551,548,545,558],[554,546,534,559],[557,526,523,549],[560,519,504,530],[563,529,516,534],[566,516,512,530],[568,522,513,528],[571,521,511,530],[574,508,499,537],[577,517,503,518],[580,509,504,519],[583,502,500,527],[586,504,495,508],[589,518,492,519],[591,515,500,527],[594,497,489,517],[597,523,496,547],[600,541,509,547],[603,537,527,552],[606,529,524,549],[609,507,505,531],[612,512,497,515],[615,518,509,523],[617,517,510,519],[620,512,510,520],[623,501,497,514],[626,496,495,503],[629,508,494,510],[632,502,500,511],[635,507,497,508],[638,507,496,509],[640,508,503,511],[643,507,504,510],[646,492,482,508],[649,482,479,502],[652,492,476,496],[655,488,478,501],[658,495,477,496],[661,493,480,501],[664,473,470,504],[666,476,469,487],[669,485,457,497],[672,467,455,486],[675,453,447,468],[678,447,443,458],[681,450,438,454],[684,436,431,459],[687,437,434,460],[690,429,422,440],[692,422,418,435],[695,416,414,432],[698,414,402,428],[701,407,404,425],[704,405,401,410],[707,398,394,409],[709,399,389,406],[712,390,385,406],
    [715,381,377,394],[718,378,368,387],[721,370,360,386],[724,352,349,372],[727,364,348,383],[730,385,357,387],[733,354,351,388],[735,342,307,357],[738,363,332,367],[741,351,334,389],[744,354,316,357],[747,355,346,385],[750,316,315,358],[753,327,301,328],[756,305,290,335],[759,296,294,306],[762,293,287,298],[765,297,275,313],[768,311,273,316],[770,322,309,324],[773,328,317,331],[776,346,325,351],[779,327,323,351],[782,328,313,334],[785,323,309,335],[788,290,288,324],[791,300,288,308],[794,301,295,307],[797,305,298,317],[800,290,289,316],[802,296,290,300],[805,287,282,305],[808,286,284,291],[811,301,285,302],[814,290,285,307],[816,302,282,304],[819,304,299,322],[822,307,302,313],[825,328,306,351],[828,308,304,332],[831,318,307,324],[834,311,308,326],[836,297,293,315],[839,303,293,306],[842,314,300,316],[845,321,313,325],[848,324,316,338],[851,321,313,329],[853,339,311,340],[856,341,337,350],[859,371,329,380],[862,340,337,373],[865,349,338,360],[868,354,346,368],[871,357,351,366],[874,348,340,366],[877,342,338,352],[879,343,329,349],[882,348,339,350],[885,338,336,356],[888,349,338,350],[891,344,332,354],[894,343,338,350],[897,346,334,350],[900,334,333,348],[902,324,322,340],[905,322,315,327],[908,318,314,326],[911,306,299,321],[914,322,305,324],[917,313,309,340],[920,314,303,320],[923,293,291,316],[926,292,290,300],[928,317,291,335],[931,318,311,329],[934,336,312,340],[937,304,289,346],[940,315,300,317],[943,311,300,319],[946,287,279,312],[949,271,269,290],[952,286,264,289],[955,281,272,299],[957,288,280,306],[960,294,284,302],[963,280,279,296],[966,307,279,308],[969,294,290,313],[972,290,286,297],[975,258,257,291],[978,253,250,269],[980,239,237,271],[983,215,214,242],[986,235,215,243],[989,217,205,240],[992,218,163,220],[995,237,202,243],[997,205,189,238],[1000,185,182,219],[1003,252,172,272],[1006,236,235,262]
];

const gridX = [87, 191, 318, 456, 583, 721, 848, 986];
const labels = ['03:00', '12:00', '16', '12:00', '17', '12:00', '20', '12:00'];
const gridY = [133, 167, 202, 237, 272, 307, 342, 377, 412, 446, 481, 516, 551, 586];

let out = '<g transform="translate(-62 -114)">';
gridX.forEach(x => out += `<path d="M${x}.5 114V2000" stroke="#edf1f7"/>`);
gridY.forEach(y => out += `<path d="M62 ${y}.5H4000" stroke="#edf1f7"/>`);
out += '<path d="M62 531.5H4000" stroke="#e53935"/>';
out += '<path d="M62 235.5H4000" stroke="#26a69a" stroke-dasharray="2 1"/>';

// candles
let open = 345;
bars.forEach(([x, close, high, low]) => {
    const color = close <= open ? '#26a69a' : '#ef5350';
    const top = Math.min(open, close);
    const height = Math.max(1, Math.abs(open - close));
    out += `<rect x="${x}" y="${high}" width="1" height="${low - high}" fill="${color}"/>`;
    out += `<rect x="${x - 1}" y="${top}" width="3" height="${height}" fill="${color}"/>`;
    open = close;
});

// drawings
out += '<path d="M312 250.500L992 295" stroke="#4caf50" stroke-width="1.2"/>';
out += '<path d="M312 322.500L992 367" stroke="#009688" stroke-width="1.2"/>';
out += '<rect x="493.5" y="272.5" width="666" height="15" fill="#9c27b0" fill-opacity=".2" stroke="#9c27b0"/>';

// crosshair
out += '<path d="M62 320.500H4000M1124.500 114V2000" stroke="#758696" stroke-dasharray="5 6"/></g>';
document.getElementById('plot').innerHTML = out;

let prices = '';
gridY.forEach((y, i) => {
    prices += `<path d="M0 ${y - 113.5}h5" stroke="#787b86"/>`;
    prices += `<text x="10" y="${y - 109}">${1820 - i * 2}.000</text>`;
});
document.getElementById('prices').innerHTML = prices;

let times = '';
gridX.forEach((x, i) => {
    const day = labels[i] === '20' ? ' class="day"' : '';
    times += `<path d="M${x - 61.5} 0v4" stroke="#787b86"/>`;
    times += `<text x="${x - 62}" y="22" text-anchor="middle"${day}>${labels[i]}</text>`;
});
document.getElementById('times').innerHTML = times;
```
